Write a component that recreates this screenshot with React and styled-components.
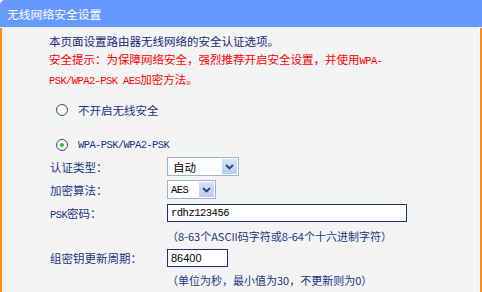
import React from 'react'
import styled, { createGlobalStyle } from 'styled-components'

const GlobalStyle = createGlobalStyle`
    html, body {
        margin: 0;
        padding: 0;
        background: #f4f4f4;
    }
`;

const cjk = `"Noto Sans CJK SC", "Noto Sans", sans-serif`;
const mono = `"Liberation Mono", monospace`;

const Page = styled.div`
    width: 482px;
    height: 292px;
    display: flex;
    flex-direction: column;
    overflow: hidden;
    font-family: ${cjk};
    font-size: 11.5px;
    text-spacing-trim: space-all;
`;

const Header = styled.div`
    height: 27px;
    flex: none;
    display: flex;
    align-items: center;
    padding-left: 7px;
    background: #6699ff;
    border-top-left-radius: 5px;
    border-bottom: 1px solid #e4ecfb;
    color: #fff;
    font-size: 11.8px;
`;

const Body = styled.div`
    flex: 1;
    background: #f4f4f4;
    border-left: 2px solid #ff8c1a;
    border-right: 2px solid #ff8c1a;
    box-shadow: inset -1px 0 0 #ffffff;
    padding: 4px 0 0 47px;
`;

const Intro = styled.p`
    margin: 0;
    line-height: 18px;
    color: #16287a;
`;

const Warn = styled.span`
    color: #ff0000;
`;

const Latin = styled.span`
    font-family: ${mono};
    font-size: 10.5px;
    letter-spacing: -0.6px;
`;

const RadioRow = styled.label`
    display: flex;
    align-items: center;
    height: 18px;
    margin-top: ${p => p.$gap}px;
    padding-left: 7px;
    color: #1a3585;
`;

const RadioDot = styled.span`
    width: 10px;
    height: 10px;
    border-radius: 50%;
    border: 1px solid #2a4f78;
    background: radial-gradient(circle, #ffffff 55%, #dfe6ee 100%);
    margin-right: 10px;
    display: flex;
    align-items: center;
    justify-content: center;
    &::after {
        content: '';
        width: 4px;
        height: 4px;
        border-radius: 50%;
        background: ${p => (p.$checked ? '#2fb82f' : 'transparent')};
    }
`;

const Form = styled.div`
    margin-top: 1px;
    display: grid;
    grid-template-columns: 118px auto;
    grid-template-rows: 23px 23px 23px 23px 22px 22px;
    align-items: center;
    color: #1a3585;
`;

const Label = styled.div`
    padding-left: 1px;
`;

const Select = styled.div`
    width: ${p => p.$w}px;
    height: 19px;
    box-sizing: border-box;
    border: 1px solid #9fb4cc;
    background: #fff;
    display: flex;
    align-items: center;
    justify-content: space-between;
    padding: 1px 1px 1px ${p => p.$pad}px;
    color: #000;
`;

const SelectText = styled.span`
    font-family: ${p => (p.$mono ? mono : cjk)};
    font-size: ${p => (p.$mono ? '10.5px' : '11.5px')};
    letter-spacing: ${p => (p.$mono ? '-0.6px' : '0')};
`;

const SelectButton = styled.span`
    width: 15px;
    height: 15px;
    background: linear-gradient(#d6e3fb, #b9cdf3);
    display: flex;
    align-items: center;
    justify-content: center;
`;

const Input = styled.input`
    width: ${p => p.$w}px;
    height: 18px;
    box-sizing: border-box;
    border: 1px solid #1a2f7e;
    background: #fff;
    padding: 0 3px;
    margin: 0;
    outline: none;
    color: #000;
    font-family: ${p => (p.$mono ? mono : '"Liberation Sans", sans-serif')};
    font-size: ${p => (p.$mono ? '10.5px' : '11px')};
    letter-spacing: ${p => (p.$mono ? '-0.5px' : '0')};
`;

const Hint = styled.div`
    grid-column: 2;
    color: #1a3585;
    font-size: 11px;
`;

const Chevron = () => (
    <svg width="9" height="6" viewBox="0 0 9 6">
        <path d="M1 1 L4.5 4.5 L8 1" fill="none" stroke="#2a3f7a" strokeWidth="1.8" />
    </svg>
);

const App = () => {
    return (
        <Page>
            <GlobalStyle />
            <Header>无线网络安全设置</Header>
            <Body>
                <Intro>
                    本页面设置路由器无线网络的安全认证选项。<br />
                    <Warn>
                        安全提示：为保障网络安全，强烈推荐开启安全设置，并使用<Latin>WPA-</Latin><br />
                        <Latin>PSK/WPA2-PSK AES</Latin>加密方法。
                    </Warn>
                </Intro>
                <RadioRow $gap={11}>
                    <RadioDot />
                    不开启无线安全
                </RadioRow>
                <RadioRow $gap={17}>
                    <RadioDot $checked />
                    <Latin>WPA-PSK/WPA2-PSK</Latin>
                </RadioRow>
                <Form>
                    <Label>认证类型：</Label>
                    <Select $w={72} $pad={5}>
                        <SelectText>自动</SelectText>
                        <SelectButton><Chevron /></SelectButton>
                    </Select>
                    <Label>加密算法：</Label>
                    <Select $w={49} $pad={3}>
                        <SelectText $mono>AES</SelectText>
                        <SelectButton><Chevron /></SelectButton>
                    </Select>
                    <Label><Latin>PSK</Latin>密码：</Label>
                    <Input $w={240} $mono defaultValue="rdhz123456" />
                    <Hint>（8-63个ASCII码字符或8-64个十六进制字符）</Hint>
                    <Label>组密钥更新周期：</Label>
                    <Input $w={61} defaultValue="86400" />
                    <Hint>（单位为秒，最小值为30，不更新则为0）</Hint>
                </Form>
            </Body>
        </Page>
    )
}

export default App
